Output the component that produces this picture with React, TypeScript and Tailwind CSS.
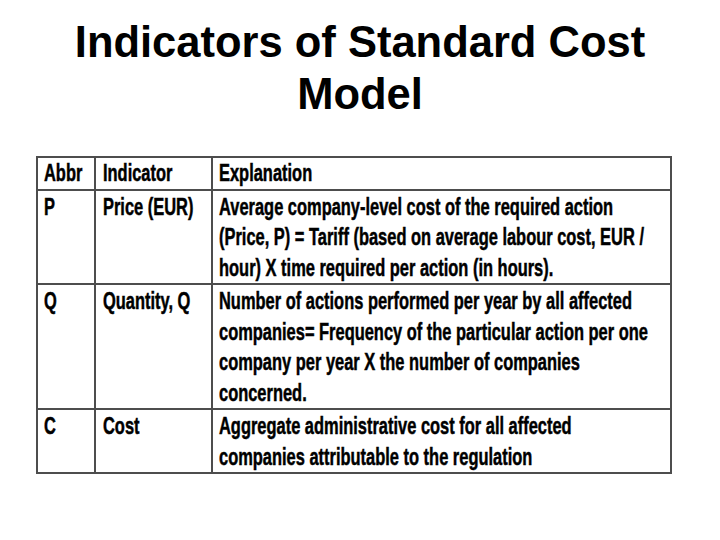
const rows = [
  { abbr: 'Abbr', indicator: 'Indicator', lines: ['Explanation'] },
  {
    abbr: 'P',
    indicator: 'Price (EUR)',
    lines: [
      'Average company-level cost of the required action',
      '(Price, P) = Tariff (based on average labour cost, EUR /',
      'hour) X time required per action (in hours).',
    ],
  },
  {
    abbr: 'Q',
    indicator: 'Quantity, Q',
    lines: [
      'Number of actions performed per year by all affected',
      'companies= Frequency of the particular action per one',
      'company per year X the number of companies',
      'concerned.',
    ],
  },
  {
    abbr: 'C',
    indicator: 'Cost',
    lines: [
      'Aggregate administrative cost for all affected',
      'companies attributable to the regulation',
    ],
  },
];

// narrow heavy face, squeezed like the slide's Arial Narrow
const Line = ({ text }: { text: string }) => (
  <span className="block whitespace-nowrap origin-left scale-x-[0.685] [-webkit-text-stroke:0.5px_black]">
    {text}
  </span>
);

export default function App() {
  return (
    <div className="w-[720px] h-[540px] bg-white text-black overflow-hidden font-['Liberation_Sans',Arial,sans-serif]">
      <h1 className="pt-[16px] text-center text-[43.5px] leading-[52px] font-bold">
        Indicators of Standard Cost
        <br />
        Model
      </h1>

      <div className="mt-[36px] ml-[36px] w-[636px] border-2 border-[#4d4d4d] text-[24px] leading-[30.5px] font-bold">
        {rows.map((row, i) => (
          <div
            key={row.abbr}
            className={`grid grid-cols-[56px_117px_1fr] ${i > 0 ? 'border-t-2 border-[#4d4d4d]' : ''}`}
          >
            <div className={`pl-[6px] overflow-hidden ${i > 0 ? 'pt-[1px]' : ''}`}>
              <Line text={row.abbr} />
            </div>
            <div className={`pl-[7px] overflow-hidden border-l-2 border-[#4d4d4d] ${i > 0 ? 'pt-[1px]' : ''}`}>
              <Line text={row.indicator} />
            </div>
            <div className={`pl-[6px] overflow-hidden border-l-2 border-[#4d4d4d] ${i > 0 ? 'pt-[1px]' : ''}`}>
              {row.lines.map((l) => (
                <Line key={l} text={l} />
              ))}
            </div>
          </div>
        ))}
      </div>
    </div>
  );
}
